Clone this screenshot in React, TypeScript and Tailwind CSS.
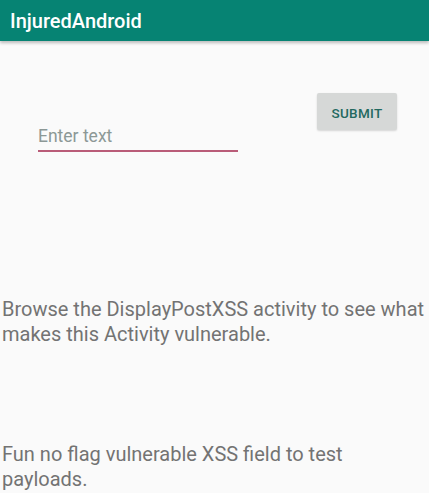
export default function App() {
  return (
    <div className="flex h-[493px] w-[429px] flex-col overflow-hidden bg-[#fafafa] font-['Roboto',sans-serif]">
      <div className="relative z-10 flex h-[41px] shrink-0 items-center bg-[#068373] pl-[10px] shadow-[0_2px_3px_rgba(0,0,0,0.25)]">
        <span className="text-[20px] font-medium leading-none text-white">InjuredAndroid</span>
      </div>

      <div className="flex items-start pt-[52px]">
        <div className="ml-[38px] mt-[33px] w-[200px] border-b-2 border-[#b95c78] pb-[3px]">
          <span className="block text-[17.5px] leading-[21px] text-[#8c9896]">Enter text</span>
        </div>
        <button className="ml-[79px] h-[37px] w-[80px] rounded-[2px] bg-[#d6d8d7] pt-[3px] text-[13.5px] font-medium tracking-[0.3px] text-[#23695f] shadow-[0_1px_2px_rgba(0,0,0,0.15)]">
          SUBMIT
        </button>
      </div>

      <p className="mt-[145px] pl-[2px] pr-[2px] text-[20px] leading-[25px] text-[#737373]">
        Browse the DisplayPostXSS activity to see what makes this Activity vulnerable.
      </p>

      <p className="mt-[95px] pl-[2px] pr-[2px] text-[20px] leading-[25px] text-[#737373]">
        Fun no flag vulnerable XSS field to test payloads.
      </p>
    </div>
  );
}
